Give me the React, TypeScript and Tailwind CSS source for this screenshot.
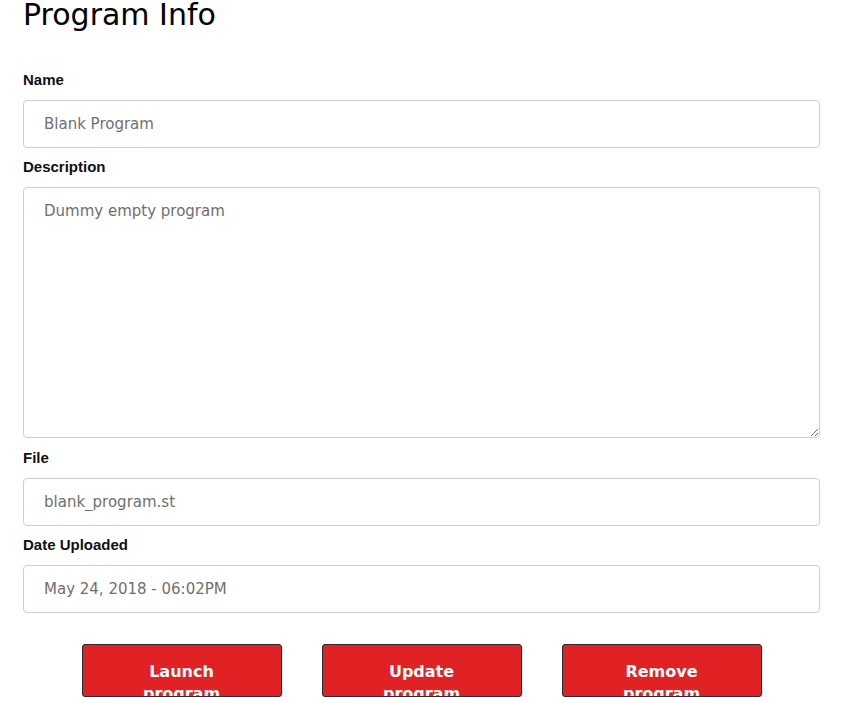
import React from 'react';

const sans = "font-['DejaVu_Sans',sans-serif]";
const labelFont = "font-['Liberation_Sans',Arial,sans-serif]";

const inputCls = `block w-[797px] h-[48px] px-5 border border-[#cfcfcf] rounded-[4px] bg-white text-[15px] text-[#6f6f6f] ${sans} outline-none`;

const Field: React.FC<{ label: string; className?: string; children: React.ReactNode }> = ({ label, className, children }) => (
    <div className={className}>
        <label className={`block mb-[10px] text-[15px] leading-5 font-bold text-[#111] ${labelFont}`}>{label}</label>
        {children}
    </div>
);

const ActionButton: React.FC<{ text: string }> = ({ text }) => (
    <button className={`w-[200px] h-[53px] overflow-hidden px-8 pt-[16px] bg-[#e02225] border border-[#2b2b2b] rounded-[3px] text-white text-[16px] leading-[22px] font-bold text-center align-top ${sans}`}>
        {text}
    </button>
);

const App: React.FC = () => {
    return (
        <div className="w-[859px] h-[703px] overflow-hidden bg-white pl-[23px]">
            <h1 className={`text-[30px] leading-[30px] text-black ${sans}`}>Program Info</h1>

            <Field label="Name" className="mt-10">
                <input readOnly value="Blank Program" className={inputCls} />
            </Field>

            <Field label="Description" className="mt-[9px]">
                <textarea
                    readOnly
                    value="Dummy empty program"
                    className={`block w-[797px] h-[251px] px-5 py-[13px] border border-[#cfcfcf] rounded-[4px] bg-white text-[15px] leading-5 text-[#6f6f6f] ${sans} outline-none`}
                />
            </Field>

            <Field label="File" className="mt-[10px]">
                <input readOnly value="blank_program.st" className={inputCls} />
            </Field>

            <Field label="Date Uploaded" className="mt-[9px]">
                <input readOnly value="May 24, 2018 - 06:02PM" className={inputCls} />
            </Field>

            <div className="w-[797px] mt-[31px] flex justify-center gap-10">
                <ActionButton text="Launch program" />
                <ActionButton text="Update program" />
                <ActionButton text="Remove program" />
            </div>
        </div>
    );
};

export default App;
